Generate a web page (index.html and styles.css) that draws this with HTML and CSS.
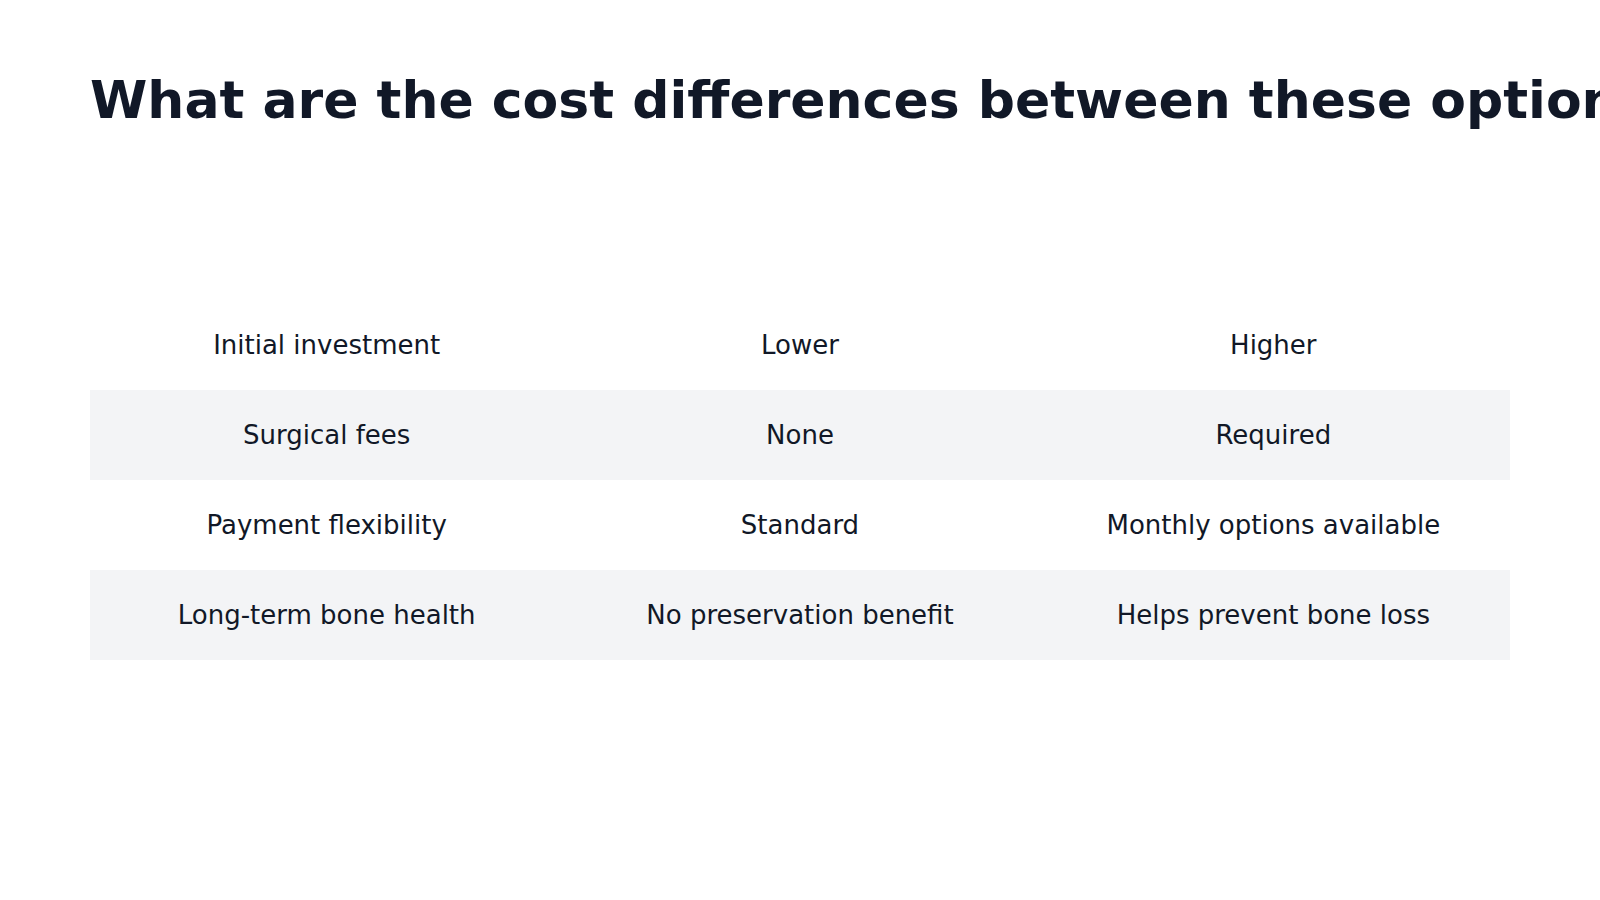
FILE: index.html
```html
<!DOCTYPE html>
<html lang="en">
<head>
<meta charset="utf-8">
<title>Cost differences</title>
<link rel="stylesheet" href="styles.css">
</head>
<body>
<main class="page">
  <h1 class="title">What are the cost differences between these options?</h1>
  <section class="content">
    <table class="compare">
      <tbody>
        <tr><td>Initial investment</td><td>Lower</td><td>Higher</td></tr>
        <tr><td>Surgical fees</td><td>None</td><td>Required</td></tr>
        <tr><td>Payment flexibility</td><td>Standard</td><td>Monthly options available</td></tr>
        <tr><td>Long-term bone health</td><td>No preservation benefit</td><td>Helps prevent bone loss</td></tr>
      </tbody>
    </table>
  </section>
</main>
</body>
</html>
```

FILE: styles.css
```css
* { box-sizing: border-box; }
html, body {
  margin: 0;
  padding: 0;
  background: #ffffff;
  overflow: hidden;
}
body {
  font-family: "DejaVu Sans", "Liberation Sans", sans-serif;
  color: #111827;
}
.page {
  width: 1600px;
  height: 900px;
  padding: 69px 90px 72px;
  display: flex;
  flex-direction: column;
}
.title {
  margin: 0;
  font-size: 52px;
  line-height: 1.2;
  font-weight: 700;
  white-space: nowrap;
  color: #111827;
}
.content {
  flex: 1;
  display: flex;
  flex-direction: column;
  justify-content: center;
}
.compare {
  width: 100%;
  border-collapse: collapse;
  table-layout: fixed;
}
.compare td {
  height: 90px;
  padding: 0 16px;
  text-align: center;
  vertical-align: middle;
  font-size: 26px;
  color: #111827;
}
.compare tr:nth-child(even) td {
  background: #f3f4f6;
}
```
